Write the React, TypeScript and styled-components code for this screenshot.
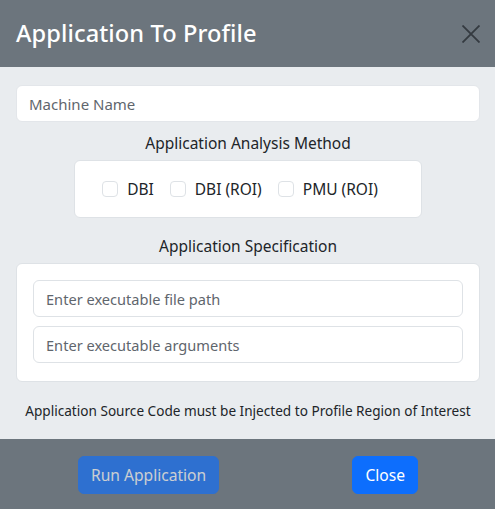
import React from "react";
import styled, { createGlobalStyle } from "styled-components";

const GlobalStyle = createGlobalStyle`
  html, body { margin: 0; padding: 0; }
  body {
    font-family: "Noto Sans", "Open Sans", sans-serif;
    color: #212529;
    background: #6c757d;
  }
  * { box-sizing: border-box; }
`;

const Modal = styled.div`
  width: 495px;
  height: 509px;
  display: flex;
  flex-direction: column;
  background: #6c757d;
`;

const Header = styled.div`
  height: 67px;
  flex: none;
  display: flex;
  align-items: center;
  justify-content: space-between;
  padding: 0 14px 0 16px;
  background: #6c757d;
`;

const Title = styled.h1`
  margin: 0 0 2px 0;
  font-size: 23.6px;
  font-weight: 500;
  color: #ffffff;
  letter-spacing: 0.1px;
`;

const CloseX = styled.button`
  width: 20px;
  height: 20px;
  padding: 0;
  border: 0;
  background: transparent;
  display: flex;
  align-items: center;
  justify-content: center;
`;

const Body = styled.div`
  flex: none;
  height: 372px;
  background: #e9ecef;
  padding: 18px 15px 0 16px;
  display: flex;
  flex-direction: column;
`;

const TextInput = styled.input<{ $bordered?: boolean }>`
  width: 100%;
  height: 37px;
  padding: 0 12px;
  font-family: inherit;
  font-size: ${(p) => (p.$bordered ? "14.6px" : "15px")};
  color: #212529;
  background: #ffffff;
  border: 1px solid ${(p) => (p.$bordered ? "#dee2e6" : "#e3e6ea")};
  border-radius: 6px;
  outline: none;
  &::placeholder {
    color: #5f666d;
  }
`;

const SectionLabel = styled.div<{ $top: number }>`
  margin-top: ${(p) => p.$top}px;
  margin-bottom: 5px;
  height: 24px;
  line-height: 24px;
  text-align: center;
  font-size: 15.5px;
  color: #212529;
`;

const MethodBox = styled.div`
  align-self: center;
  width: 348px;
  height: 58px;
  background: #ffffff;
  border: 1px solid #dee2e6;
  border-radius: 6px;
  display: flex;
  align-items: center;
  justify-content: center;
`;

const CheckItem = styled.label`
  display: inline-flex;
  align-items: center;
  margin-right: 16px;
  font-size: 15.5px;
  color: #212529;
`;

const Box = styled.span`
  width: 16px;
  height: 16px;
  margin-right: 9px;
  border: 1px solid #dee2e6;
  border-radius: 4px;
  background: #ffffff;
  display: inline-block;
`;

const Card = styled.div`
  background: #ffffff;
  border: 1px solid #dee2e6;
  border-radius: 6px;
  padding: 16px 16px 18px 16px;
  display: flex;
  flex-direction: column;
  gap: 9px;
`;

const Note = styled.div`
  margin-top: 19px;
  text-align: center;
  font-size: 13.6px;
  color: #212529;
  white-space: nowrap;
`;

const Footer = styled.div`
  flex: 1;
  background: #6c757d;
  display: flex;
  align-items: flex-start;
  justify-content: space-between;
  padding: 17px 77px 0 78px;
`;

const Button = styled.button<{ $disabled?: boolean }>`
  height: 38px;
  padding: 0 12px;
  border: 1px solid #0d6efd;
  border-radius: 6px;
  background: #0d6efd;
  color: #ffffff;
  font-family: inherit;
  font-size: 15.6px;
  opacity: ${(p) => (p.$disabled ? 0.65 : 1)};
`;

export default function App() {
  return (
    <>
      <GlobalStyle />
      <Modal>
        <Header>
          <Title>Application To Profile</Title>
          <CloseX aria-label="Close">
            <svg width="18" height="18" viewBox="0 0 16 16">
              <path d="M1 1L15 15M15 1L1 15" stroke="#343a40" strokeWidth="1.6" strokeLinecap="square" />
            </svg>
          </CloseX>
        </Header>
        <Body>
          <TextInput placeholder="Machine Name" />
          <SectionLabel $top={9}>Application Analysis Method</SectionLabel>
          <MethodBox>
            <CheckItem>
              <Box />
              DBI
            </CheckItem>
            <CheckItem>
              <Box />
              DBI (ROI)
            </CheckItem>
            <CheckItem>
              <Box />
              PMU (ROI)
            </CheckItem>
          </MethodBox>
          <SectionLabel $top={16}>Application Specification</SectionLabel>
          <Card>
            <TextInput $bordered placeholder="Enter executable file path" />
            <TextInput $bordered placeholder="Enter executable arguments" />
          </Card>
          <Note>Application Source Code must be Injected to Profile Region of Interest</Note>
        </Body>
        <Footer>
          <Button $disabled>Run Application</Button>
          <Button>Close</Button>
        </Footer>
      </Modal>
    </>
  );
}
